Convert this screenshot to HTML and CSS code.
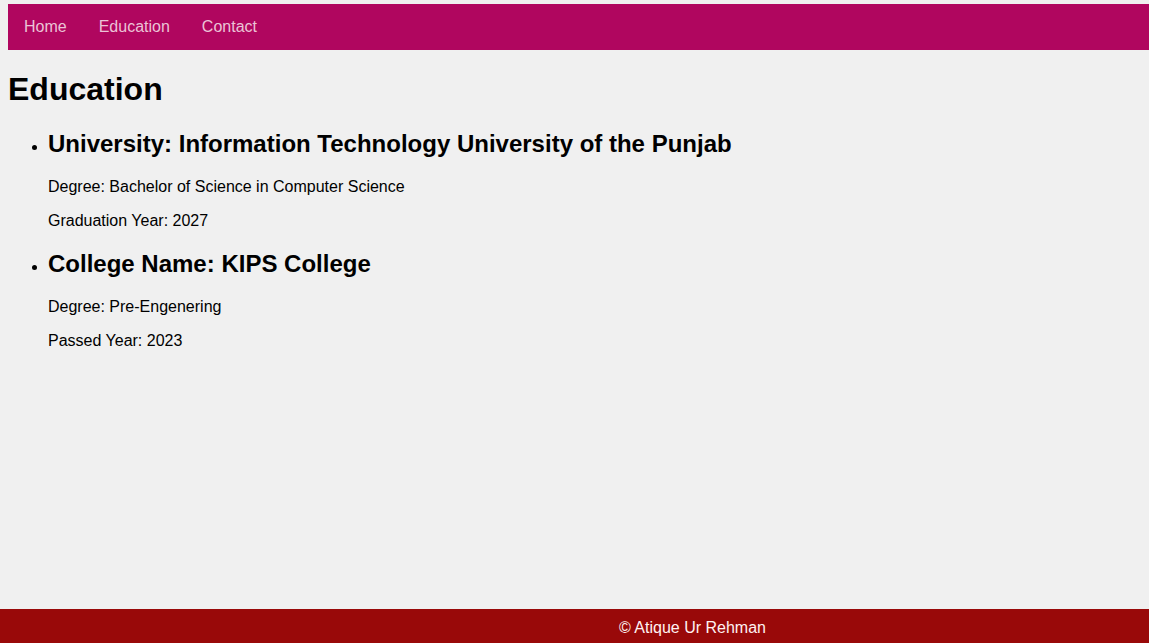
FILE: index.html
```html
<!DOCTYPE html>
<html lang="en">
<head>
<meta charset="utf-8">
<title>Education</title>
<link rel="stylesheet" href="styles.css">
</head>
<body>
<div class="page">
  <nav class="nav">
    <a class="nav-link" href="#">Home</a><a class="nav-link" href="#">Education</a><a class="nav-link" href="#">Contact</a>
  </nav>
  <main class="content">
    <h1 class="title">Education</h1>
    <ul class="edu-list">
      <li>
        <h2 class="edu-name">University: Information Technology University of the Punjab</h2>
        <p class="edu-line">Degree: Bachelor of Science in Computer Science</p>
        <p class="edu-line">Graduation Year: 2027</p>
      </li>
      <li>
        <h2 class="edu-name">College Name: KIPS College</h2>
        <p class="edu-line">Degree: Pre-Engenering</p>
        <p class="edu-line">Passed Year: 2023</p>
      </li>
    </ul>
  </main>
  <footer class="footer">
    <span class="footer-text">© Atique Ur Rehman</span>
  </footer>
</div>
</body>
</html>
```
FILE: styles.css
```css
html, body {
  margin: 0;
  padding: 0;
}
body {
  background: #f0f0f0;
  font-family: "Liberation Sans", Arial, sans-serif;
  color: #000;
}
.page {
  min-height: 100vh;
  display: grid;
  grid-template-rows: auto 1fr auto;
}
.nav {
  margin: 4px 0 0 8px;
  height: 46px;
  box-sizing: border-box;
  padding: 14px 0;
  background: #b0065f;
  display: flex;
  line-height: 18px;
}
.nav-link {
  padding: 0 16px;
  color: #ebc3d6;
  text-decoration: none;
  font-size: 16px;
}
.content {
  padding: 0 8px;
}
.title {
  font-size: 32px;
  margin: 21px 0 22px;
}
.edu-list {
  padding-left: 40px;
  margin: 16px 0;
}
.edu-name {
  font-size: 24px;
  margin: 19.92px 0;
}
.edu-line {
  font-size: 16px;
  margin: 16px 0;
}
.footer {
  height: 34px;
  box-sizing: border-box;
  padding: 10px 0 6px 236px;
  background: #990909;
  color: #fff2f2;
  text-align: center;
  font-size: 16px;
  line-height: 18px;
}
```
